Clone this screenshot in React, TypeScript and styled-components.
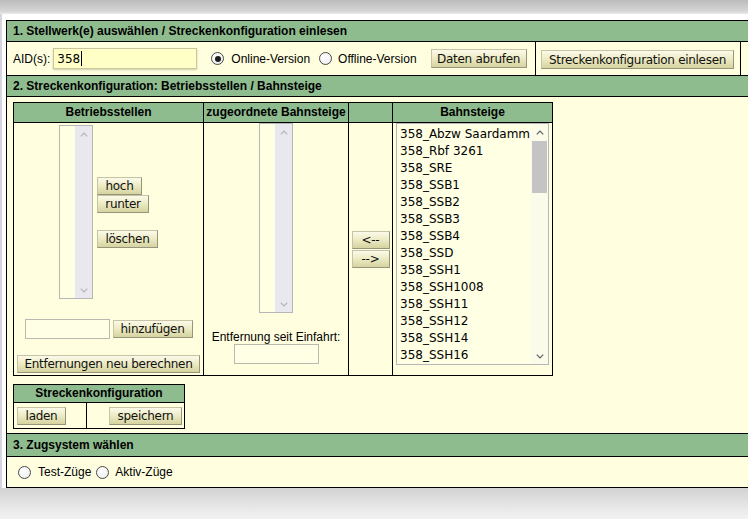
import React, { FC } from 'react';
import styled, { createGlobalStyle } from 'styled-components';

const GlobalStyle = createGlobalStyle`
  html, body {
    margin: 0;
    padding: 0;
    background: #fff;
    overflow: hidden;
  }
  body {
    font-family: 'Liberation Sans', Arial, sans-serif;
    font-size: 12px;
    color: #000;
  }
`;

const TopBar = styled.div`
  height: 14px;
  background: linear-gradient(to bottom, #bcbcbc 0%, #d6d6d6 80%, #ebebeb 100%);
`;

const Frame = styled.div`
  padding: 6px 0 0 4px;
  border-left: 2px solid #d4d5de;
`;

const BottomShade = styled.div`
  height: 40px;
  background: linear-gradient(to bottom, #d2d2d2 0%, #ececec 60%, #fafafa 100%);
`;

const Panel = styled.div`
  width: 800px;
  border: 1px solid #000;
  border-right: none;
  background: #ffffe0;
`;

const SectionHeader = styled.div<{ $h?: number }>`
  height: ${({ $h }) => $h ?? 20}px;
  line-height: ${({ $h }) => $h ?? 20}px;
  padding-left: 6px;
  background: #8fbc8f;
  border-bottom: 1px solid #000;
  font-weight: bold;
  white-space: nowrap;
`;

const TopRow = styled.div`
  display: flex;
  height: 33px;
  border-bottom: 1px solid #000;
`;

const TopCell = styled.div<{ $w?: number; $pl: number }>`
  display: flex;
  align-items: center;
  width: ${({ $w }) => ($w ? `${$w}px` : 'auto')};
  flex: ${({ $w }) => ($w ? 'none' : '1')};
  padding-left: ${({ $pl }) => $pl}px;
  border-right: 1px solid #000;
  box-sizing: border-box;
`;

const Label = styled.span<{ $ml?: number; $mr?: number }>`
  margin-left: ${({ $ml }) => $ml ?? 0}px;
  margin-right: ${({ $mr }) => $mr ?? 0}px;
  white-space: nowrap;
`;

const TextBox = styled.div<{ $w: number; $h?: number; $focus?: boolean }>`
  box-sizing: border-box;
  display: flex;
  align-items: center;
  width: ${({ $w }) => $w}px;
  height: ${({ $h }) => $h ?? 20}px;
  padding: 0 3px;
  background: ${({ $focus }) => ($focus ? '#ffffc6' : '#ffffe6')};
  border: 1px solid ${({ $focus }) => ($focus ? '#c9c6a0' : '#b9b9b0')};
  box-shadow: ${({ $focus }) =>
    $focus ? '0 1px 2px rgba(120, 110, 60, 0.35)' : 'none'};
  font: 12px 'DejaVu Sans', Verdana, sans-serif;
`;

const Caret = styled.span`
  display: inline-block;
  width: 1px;
  height: 15px;
  background: #000;
  margin-left: 1px;
`;

const RadioCircle = styled.span<{ $ml?: number }>`
  box-sizing: border-box;
  display: inline-flex;
  align-items: center;
  justify-content: center;
  width: 13px;
  height: 13px;
  margin-left: ${({ $ml }) => $ml ?? 0}px;
  border-radius: 50%;
  border: 1px solid #4a4a4a;
  background: radial-gradient(circle at 40% 35%, #ffffff 0%, #f4f4f4 60%, #dcdcdc 100%);
  flex: none;
`;

const RadioDot = styled.span`
  width: 6px;
  height: 6px;
  border-radius: 50%;
  background: #1c1c1c;
`;

const Radio: FC<{ checked?: boolean; ml?: number; label: string; gap: number }> = ({
  checked,
  ml,
  label,
  gap,
}) => (
  <>
    <RadioCircle $ml={ml}>{checked ? <RadioDot /> : null}</RadioCircle>
    <Label $ml={gap}>{label}</Label>
  </>
);

const Button = styled.button<{ $w: number; $h?: number; $ml?: number; $mt?: number }>`
  box-sizing: border-box;
  flex: none;
  width: ${({ $w }) => $w}px;
  height: ${({ $h }) => $h ?? 18}px;
  margin: ${({ $mt }) => $mt ?? 0}px 0 0 ${({ $ml }) => $ml ?? 0}px;
  padding: 0;
  font: 12px 'DejaVu Sans', Verdana, sans-serif;
  letter-spacing: -0.3px;
  line-height: 16px;
  color: #111;
  white-space: nowrap;
  text-align: center;
  background: linear-gradient(to bottom, #fbfaea 0%, #eeecc6 45%, #d6d3a0 100%);
  border: 1px solid #c6c4a4;
  border-right-color: #96947a;
  border-bottom-color: #96947a;
  border-radius: 0;
  cursor: pointer;
`;

const SectionBody = styled.div`
  padding: 5px 6px 4px 6px;
  border-bottom: 1px solid #000;
`;

const GridTable = styled.div<{ $cols: string }>`
  display: grid;
  grid-template-columns: ${({ $cols }) => $cols};
  width: max-content;
  border: 1px solid #000;
`;

const HeadCell = styled.div<{ $h: number; $last?: boolean; $span?: number }>`
  height: ${({ $h }) => $h}px;
  line-height: ${({ $h }) => $h}px;
  grid-column: span ${({ $span }) => $span ?? 1};
  background: #8fbc8f;
  border-bottom: 1px solid #000;
  border-right: ${({ $last }) => ($last ? 'none' : '1px solid #000')};
  font-weight: bold;
  text-align: center;
  white-space: nowrap;
`;

const BodyCell = styled.div<{ $last?: boolean }>`
  display: flex;
  flex-direction: column;
  height: 252px;
  border-right: ${({ $last }) => ($last ? 'none' : '1px solid #000')};
`;

const CenterCol = styled(BodyCell)`
  align-items: center;
`;

const MiddleCol = styled(BodyCell)`
  align-items: center;
  justify-content: center;
  gap: 1px;
`;

const StartCol = styled(BodyCell)`
  padding-left: 3px;
`;

const HRow = styled.div<{ $mt?: number; $gap?: number }>`
  display: flex;
  align-items: center;
  margin-top: ${({ $mt }) => $mt ?? 0}px;
  gap: ${({ $gap }) => $gap ?? 0}px;
`;

const ButtonStack = styled.div`
  display: flex;
  flex-direction: column;
  align-items: flex-start;
  margin-left: 4px;
`;

const Caption = styled.div<{ $mt: number }>`
  margin-top: ${({ $mt }) => $mt}px;
  line-height: 14px;
  white-space: nowrap;
`;

/* fake list box with scroll bar */
const ListFrame = styled.div<{ $w: number; $h: number; $mt?: number; $ml?: number }>`
  box-sizing: border-box;
  display: flex;
  width: ${({ $w }) => $w}px;
  height: ${({ $h }) => $h}px;
  margin: ${({ $mt }) => $mt ?? 0}px 0 0 ${({ $ml }) => $ml ?? 0}px;
  border: 1px solid #b7b7b7;
  background: #ffffe4;
  flex: none;
`;

const ListItems = styled.div`
  flex: 1;
  overflow: hidden;
  padding: 2px 0 0 3px;
  font: 12px 'DejaVu Sans', Verdana, sans-serif;
  line-height: 17px;
  white-space: nowrap;
`;

const Track = styled.div<{ $active?: boolean }>`
  display: flex;
  flex-direction: column;
  width: 17px;
  background: ${({ $active }) => ($active ? '#fbfbe9' : '#e8e8ee')};
`;

const ArrowBox = styled.div`
  display: flex;
  align-items: center;
  justify-content: center;
  height: 16px;
`;

const Thumb = styled.div`
  margin: 1px 1px 0 1px;
  height: 52px;
  background: #c4c4c4;
`;

const Spacer = styled.div`
  flex: 1;
`;

const Chevron: FC<{ up?: boolean; color: string }> = ({ up, color }) => (
  <svg width="8" height="5" viewBox="0 0 8 5">
    <path
      d={up ? 'M0.8 4.3 L4 1 L7.2 4.3' : 'M0.8 0.7 L4 4 L7.2 0.7'}
      fill="none"
      stroke={color}
      strokeWidth="1.2"
    />
  </svg>
);

const ListBox: FC<{
  w: number;
  h: number;
  mt?: number;
  ml?: number;
  items?: string[];
}> = ({ w, h, mt, ml, items = [] }) => {
  const active = items.length > 0;
  const arrow = active ? '#606060' : '#b4b4b8';
  return (
    <ListFrame $w={w} $h={h} $mt={mt} $ml={ml}>
      <ListItems>
        {items.map((item) => (
          <div key={item}>{item}</div>
        ))}
      </ListItems>
      <Track $active={active}>
        <ArrowBox>
          <Chevron up color={arrow} />
        </ArrowBox>
        {active ? <Thumb /> : null}
        <Spacer />
        <ArrowBox>
          <Chevron color={arrow} />
        </ArrowBox>
      </Track>
    </ListFrame>
  );
};

const PLATFORMS = [
  '358_Abzw Saardamm',
  '358_Rbf 3261',
  '358_SRE',
  '358_SSB1',
  '358_SSB2',
  '358_SSB3',
  '358_SSB4',
  '358_SSD',
  '358_SSH1',
  '358_SSH1008',
  '358_SSH11',
  '358_SSH12',
  '358_SSH14',
  '358_SSH16',
];

const ConfigTable: FC = () => (
  <GridTable $cols="190px 145px 44px 159px">
    <HeadCell $h={19}>Betriebsstellen</HeadCell>
    <HeadCell $h={19}>zugeordnete Bahnsteige</HeadCell>
    <HeadCell $h={19} />
    <HeadCell $h={19} $last>
      Bahnsteige
    </HeadCell>

    <CenterCol>
      <HRow $mt={2}>
        <ListBox w={34} h={174} />
        <ButtonStack>
          <Button $w={45}>hoch</Button>
          <Button $w={52}>runter</Button>
          <Button $w={61} $mt={17}>
            löschen
          </Button>
        </ButtonStack>
      </HRow>
      <HRow $mt={20} $gap={3}>
        <TextBox $w={85} />
        <Button $w={80}>hinzufügen</Button>
      </HRow>
      <Button $w={183} $mt={16}>
        Entfernungen neu berechnen
      </Button>
    </CenterCol>

    <CenterCol>
      <ListBox w={34} h={190} />
      <Caption $mt={17}>Entfernung seit Einfahrt:</Caption>
      <TextBox $w={85} $h={20} />
    </CenterCol>

    <MiddleCol>
      <Button $w={38}>&lt;--</Button>
      <Button $w={38}>--&gt;</Button>
    </MiddleCol>

    <StartCol $last>
      <ListBox w={153} h={242} items={PLATFORMS} />
    </StartCol>
  </GridTable>
);

const RouteTable = styled(GridTable)`
  margin-top: 8px;
`;

const ButtonCell = styled.div<{ $end?: boolean; $last?: boolean }>`
  display: flex;
  align-items: center;
  justify-content: ${({ $end }) => ($end ? 'flex-end' : 'flex-start')};
  height: 25px;
  padding: 0 ${({ $end }) => ($end ? 2 : 0)}px 0 ${({ $end }) => ($end ? 0 : 3)}px;
  border-right: ${({ $last }) => ($last ? 'none' : '1px solid #000')};
`;

const BottomRow = styled.div`
  display: flex;
  align-items: center;
  height: 30px;
  padding-left: 11px;
`;

const App: FC = () => (
  <>
    <GlobalStyle />
    <TopBar />
    <Frame>
      <Panel>
        <SectionHeader>1. Stellwerk(e) auswählen / Streckenkonfiguration einlesen</SectionHeader>
        <TopRow>
          <TopCell $w={529} $pl={6}>
            <Label $mr={3}>AID(s):</Label>
            <TextBox $w={144} $h={21} $focus>
              358
              <Caret />
            </TextBox>
            <Radio checked ml={14} gap={7} label="Online-Version" />
            <Radio ml={9} gap={6} label="Offline-Version" />
            <Button $w={96} $h={19} $ml={14}>
              Daten abrufen
            </Button>
          </TopCell>
          <TopCell $w={205} $pl={5}>
            <Button $w={193} $h={19} $mt={2}>
              Streckenkonfiguration einlesen
            </Button>
          </TopCell>
          <TopCell $pl={0} />
        </TopRow>

        <SectionHeader>2. Streckenkonfiguration: Betriebsstellen / Bahnsteige</SectionHeader>
        <SectionBody>
          <ConfigTable />
          <RouteTable $cols="73px 97px">
            <HeadCell $h={17} $span={2} $last>
              Streckenkonfiguration
            </HeadCell>
            <ButtonCell>
              <Button $w={49}>laden</Button>
            </ButtonCell>
            <ButtonCell $end $last>
              <Button $w={73}>speichern</Button>
            </ButtonCell>
          </RouteTable>
        </SectionBody>

        <SectionHeader $h={22}>3. Zugsystem wählen</SectionHeader>
        <BottomRow>
          <Radio gap={7} label="Test-Züge" />
          <Radio ml={5} gap={6} label="Aktiv-Züge" />
        </BottomRow>
      </Panel>
    </Frame>
    <BottomShade />
  </>
);

export default App;
